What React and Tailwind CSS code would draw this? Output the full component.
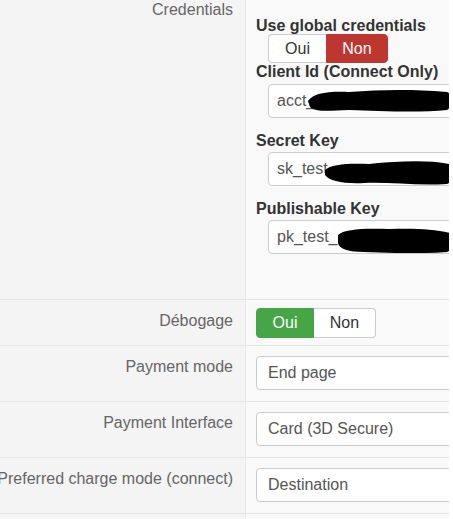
import React from "react";

const font = { fontFamily: '"Liberation Sans", Arial, sans-serif' };

function Toggle({ active, className = "" }) {
  return (
    <div className={`flex text-[16px] leading-[20px] ${className}`}>
      <div
        className={`w-[58px] flex items-center justify-center rounded-l-[4px] ${
          active === "oui"
            ? "bg-[#46a546] text-white border border-[#46a546]"
            : "bg-white text-[#333] border border-[#ccc] border-r-0"
        }`}
      >
        Oui
      </div>
      <div
        className={`w-[62px] flex items-center justify-center rounded-r-[4px] ${
          active === "non"
            ? "bg-[#bd362f] text-white border border-[#bd362f]"
            : "bg-white text-[#333] border border-[#ccc] border-l-0"
        }`}
      >
        Non
      </div>
    </div>
  );
}

function Blob({ d }) {
  return (
    <svg
      className="absolute left-0 top-0"
      width="200"
      height="34"
      viewBox="0 0 200 34"
    >
      <path d={d} fill="#000" />
    </svg>
  );
}

function CredInput({ text, blob }) {
  return (
    <div className="relative ml-[12px] h-[34px] w-[230px] bg-white border border-[#ccc] rounded-[4px] pl-[8px] pt-[6px] text-[16px] leading-[20px] text-[#555] whitespace-nowrap overflow-hidden">
      {text}
      <Blob d={blob} />
    </div>
  );
}

function SelectBox({ text }) {
  return (
    <div className="h-[34px] w-[230px] bg-white border border-[#ccc] rounded-[4px] pl-[11px] pt-[6px] text-[16px] leading-[20px] text-[#555] whitespace-nowrap">
      {text}
    </div>
  );
}

function Row({ label, children, rightClass = "", labelClass = "" }) {
  return (
    <div className="flex border-t border-[#e3e3e3]">
      <div
        className={`w-[246px] shrink-0 bg-[#f4f4f4] border-r border-[#e8e8e8] flex justify-end pr-[12px] text-[16px] leading-[20px] text-[#666] whitespace-nowrap ${labelClass}`}
      >
        <span>{label}</span>
      </div>
      <div className={`flex-1 pl-[10px] ${rightClass}`}>{children}</div>
    </div>
  );
}

export default function App() {
  return (
    <div className="w-[453px] h-[519px] bg-white overflow-hidden" style={font}>
      <div className="w-[449px] h-[519px] bg-[#f9f9f9] overflow-hidden">
        {/* Credentials */}
        <div className="flex h-[299px]">
          <div className="w-[246px] shrink-0 bg-[#f4f4f4] border-r border-[#e8e8e8] text-right pr-[12px] text-[16px] leading-[20px] text-[#666]">
            Credentials
          </div>
          <div className="flex-1 pl-[10px] text-[#333]">
            <div className="mt-[17px] text-[16px] leading-[17px] font-bold whitespace-nowrap">
              Use global credentials
            </div>
            <Toggle active="non" className="ml-[12px] h-[29px]" />
            <div className="text-[16px] leading-[17px] font-bold whitespace-nowrap">
              Client Id (Connect Only)
            </div>
            <div className="mt-[4px]">
              <CredInput
                text="acct_"
                blob="M39 16 C44 8 60 6 80 7 C110 5 140 4 178 7 C185 10 185 21 178 25 C150 28 110 26 80 25 C60 26 46 27 41 22 Z"
              />
            </div>
            <div className="mt-[14px] text-[16px] leading-[17px] font-bold whitespace-nowrap">
              Secret Key
            </div>
            <div className="mt-[3px]">
              <CredInput
                text="sk_test_"
                blob="M56 17 C62 11 80 10 100 11 C130 8 160 7 180 11 C187 16 186 28 178 31 C150 33 120 29 95 30 C75 31 60 28 56 22 Z"
              />
            </div>
            <div className="mt-[14px] text-[16px] leading-[17px] font-bold whitespace-nowrap">
              Publishable Key
            </div>
            <div className="mt-[3px]">
              <CredInput
                text="pk_test_"
                blob="M69 14 C75 8 95 7 120 8 C145 7 165 8 181 12 C187 18 186 28 178 31 C150 33 120 32 95 31 C80 31 70 28 69 22 Z"
              />
            </div>
          </div>
        </div>

        {/* Débogage */}
        <Row label="Débogage" labelClass="pt-[11px] h-[45px]" rightClass="pt-[8px]">
          <Toggle active="oui" className="h-[30px]" />
        </Row>

        <Row label="Payment mode" labelClass="pt-[11px] h-[55px]" rightClass="pt-[10px]">
          <SelectBox text="End page" />
        </Row>
        <Row label="Payment Interface" labelClass="pt-[11px] h-[55px]" rightClass="pt-[10px]">
          <SelectBox text="Card (3D Secure)" />
        </Row>
        <Row
          label="Preferred charge mode (connect)"
          labelClass="pt-[11px] h-[55px]"
          rightClass="pt-[10px]"
        >
          <SelectBox text="Destination" />
        </Row>
        <Row label="" labelClass="h-[40px]" />
      </div>
    </div>
  );
}
